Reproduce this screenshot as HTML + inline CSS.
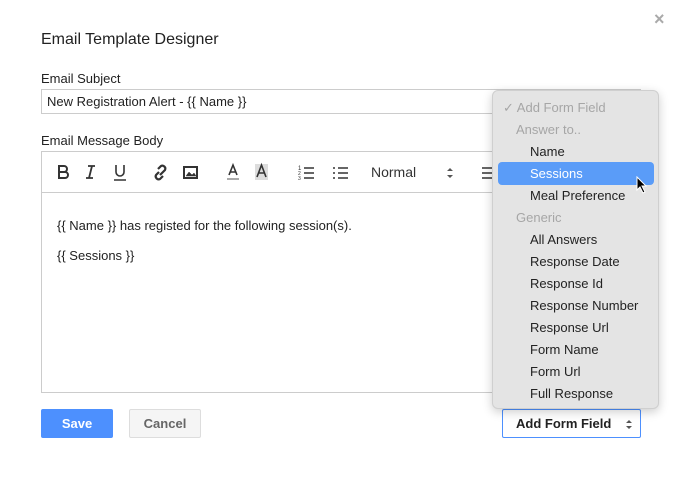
<!DOCTYPE html>
<html><head><meta charset="utf-8"><style>
*{box-sizing:border-box;margin:0;padding:0}
body{width:683px;height:496px;background:#fff;font-family:"Liberation Sans",sans-serif;color:#222;position:relative;overflow:hidden}
.a{position:absolute}
.lbl{font-size:13px;color:#222}
.menu{left:492px;top:90px;width:167px;height:319px;background:#e4e4e4;border:1px solid #cfcfcf;border-radius:6px;box-shadow:0 3px 10px rgba(0,0,0,.2)}
.mi{position:absolute;font-size:13px;color:#222;left:37px;line-height:22px}
.g{color:#a6a6a6;left:23px}
</style></head><body>
<div class="a" style="left:654px;top:9px;font-size:18px;color:#aaa;font-weight:bold">×</div>
<div class="a" style="left:41px;top:31px;font-size:16px;color:#222">Email Template Designer</div>
<div class="a lbl" style="left:41px;top:71px">Email Subject</div>
<div class="a" style="left:41px;top:89px;width:600px;height:25px;border:1px solid #ccc;font-size:13px;padding:4px 5px">New Registration Alert - {{ Name }}</div>
<div class="a lbl" style="left:41px;top:133px">Email Message Body</div>
<div class="a" style="left:41px;top:151px;width:600px;height:242px;border:1px solid #ccc"></div>
<div class="a" style="left:42px;top:192px;width:598px;height:1px;background:#ccc"></div>
<svg class="a" style="left:50px;top:160px" width="450" height="25" viewBox="0 0 450 25" fill="none" stroke="#333" stroke-width="2">
<path d="M9 6h5a3 3 0 0 1 0 6H9zM9 12h6a3 3 0 0 1 0 6H9zM9 5v14"/>
<path d="M38 6h7M36 18h7M42 6l-3 12" stroke-width="1.8"/>
<path d="M66 5v7a4 4 0 0 0 8 0V5M64 20h12" stroke-width="1.6"/>
<path d="M108 9l3-3a3 3 0 0 1 4 4l-3 3M113 16l-3 3a3 3 0 0 1-4-4l3-3M110 15l4-4" stroke-width="2.2"/>
<rect x="134" y="7" width="13" height="11" stroke-width="2"/><path d="M136 16l3-4 3 3 2-2 2 3z" fill="#333" stroke-width="0.5"/>
<path d="M179 15l4-10 4 10M180.5 12h5" stroke-width="1.6"/><path d="M177 19h12" stroke="#aaa" stroke-width="2"/>
<rect x="205" y="4" width="13" height="16" fill="#ddd" stroke="none"/><path d="M207 17l4.5-12 4.5 12M208.5 13h6" stroke-width="1.6"/>
<path d="M254 8h10M254 13h10M254 18h10" stroke-width="1.6"/><text x="248" y="10" font-size="6" fill="#333" stroke="none">1</text><text x="248" y="15" font-size="5" fill="#333" stroke="none">2</text><text x="248" y="20" font-size="5" fill="#333" stroke="none">3</text>
<path d="M283 8h2M283 13h2M283 18h2M288 8h10M288 13h10M288 18h10" stroke-width="1.6"/>
<path d="M397 11l3-3 3 3z M397 15l3 3 3-3z" fill="#555" stroke="none"/>
<path d="M432 8h10M432 13h10M432 18h10" stroke-width="1.6"/>
</svg>
<div class="a" style="left:371px;top:164px;font-size:14px;color:#333">Normal</div>
<div class="a" style="left:57px;top:218px;font-size:13px">{{ Name }} has registed for the following session(s).</div>
<div class="a" style="left:57px;top:248px;font-size:13px">{{ Sessions }}</div>
<div class="a" style="left:41px;top:409px;width:72px;height:29px;background:#4d90fe;border-radius:2px;color:#fff;font-weight:bold;font-size:13px;text-align:center;line-height:29px">Save</div>
<div class="a" style="left:129px;top:409px;width:72px;height:29px;background:#f5f5f5;border:1px solid #ddd;border-radius:2px;color:#666;font-weight:bold;font-size:13px;text-align:center;line-height:27px">Cancel</div>
<div class="a" style="left:502px;top:409px;width:139px;height:29px;border:1px solid #4d90fe;border-radius:2px;font-weight:bold;font-size:13px;line-height:27px;padding-left:13px">Add Form Field<svg style="position:absolute;left:122px;top:9px" width="8" height="12"><path d="M1 4l3-3 3 3zM1 7l3 3 3-3z" fill="#555"/></svg></div>
<div class="a menu">
<div class="mi g" style="top:6px;left:10px">✓ Add Form Field</div>
<div class="mi g" style="top:28px">Answer to..</div>
<div class="mi" style="top:50px">Name</div>
<div class="a" style="left:5px;top:71px;width:156px;height:23px;background:#5a9cf8;border-radius:4px"></div>
<div class="mi" style="top:72px;color:#fff">Sessions</div>
<div class="mi" style="top:94px">Meal Preference</div>
<div class="mi g" style="top:116px">Generic</div>
<div class="mi" style="top:138px">All Answers</div>
<div class="mi" style="top:160px">Response Date</div>
<div class="mi" style="top:182px">Response Id</div>
<div class="mi" style="top:204px">Response Number</div>
<div class="mi" style="top:226px">Response Url</div>
<div class="mi" style="top:248px">Form Name</div>
<div class="mi" style="top:270px">Form Url</div>
<div class="mi" style="top:292px">Full Response</div>
</div>
<svg class="a" style="left:636px;top:176px" width="12" height="18" viewBox="0 0 12 18"><path d="M1 1 L1 14 L4 11 L7 17 L9 16 L6 10 L10 10 Z" fill="#000" stroke="#fff" stroke-width="1"/></svg>
</body></html>
